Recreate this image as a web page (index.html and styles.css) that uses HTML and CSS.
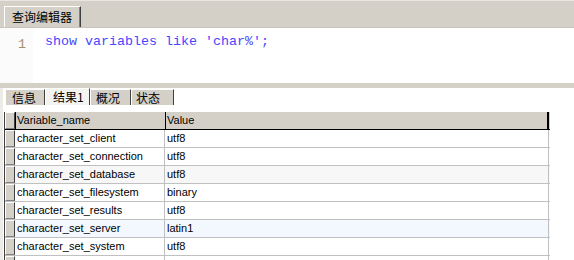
FILE: index.html
```html
<!DOCTYPE html>
<html lang="zh-CN">
<head>
    <meta charset="UTF-8">
    <title>查询编辑器</title>
    <link rel="stylesheet" href="styles.css">
</head>
<body>

    <div class="top-bar">
        <div class="editor-tab">查询编辑器</div>
    </div>

    <div class="editor">
        <div class="gutter"><span class="line-no">1</span></div>
        <div class="code">show variables like 'char%';</div>
    </div>

    <div class="splitter"></div>

    <div class="result-panel">
        <div class="result-tabs">
            <div class="result-tab tab-info">信息</div>
            <div class="result-tab tab-result active">结果1</div>
            <div class="result-tab tab-profile">概况</div>
            <div class="result-tab tab-status">状态</div>
        </div>

        <div class="grid">
            <div class="grid-row head">
                <div class="marker"></div>
                <div class="cell">Variable_name</div>
                <div class="cell">Value</div>
            </div>
            <div class="grid-row">
                <div class="marker"></div>
                <div class="cell">character_set_client</div>
                <div class="cell">utf8</div>
            </div>
            <div class="grid-row">
                <div class="marker"></div>
                <div class="cell">character_set_connection</div>
                <div class="cell">utf8</div>
            </div>
            <div class="grid-row alt">
                <div class="marker"></div>
                <div class="cell">character_set_database</div>
                <div class="cell">utf8</div>
            </div>
            <div class="grid-row">
                <div class="marker"></div>
                <div class="cell">character_set_filesystem</div>
                <div class="cell">binary</div>
            </div>
            <div class="grid-row">
                <div class="marker"></div>
                <div class="cell">character_set_results</div>
                <div class="cell">utf8</div>
            </div>
            <div class="grid-row hover">
                <div class="marker"></div>
                <div class="cell">character_set_server</div>
                <div class="cell">latin1</div>
            </div>
            <div class="grid-row">
                <div class="marker"></div>
                <div class="cell">character_set_system</div>
                <div class="cell">utf8</div>
            </div>
            <div class="grid-row last">
                <div class="marker"></div>
                <div class="cell"></div>
                <div class="cell"></div>
            </div>
        </div>
    </div>

</body>
</html>
```

FILE: styles.css
```css
body {
    margin: 0;
    width: 574px;
    height: 260px;
    overflow: hidden;
    background-color: #fff;
    font-family: "Liberation Sans", Arial, "Noto Sans CJK SC", sans-serif;
}
.top-bar {
    height: 27px;
    box-sizing: border-box;
    padding-left: 4px;
    background-color: #d4d0c8;
    border-top: 1px solid #e8e6e0;
    display: flex;
    align-items: flex-end;
}
.editor-tab {
    height: 20px;
    line-height: 20px;
    padding: 0 8px 0 7px;
    white-space: nowrap;
    font-family: "Noto Sans CJK SC", sans-serif;
    font-size: 12px;
    color: #000;
    background-color: #d4d0c8;
    border-top: 1px solid #fff;
    border-left: 1px solid #fff;
    border-right: 1px solid #404040;
    box-shadow: inset -1px 0 0 #808080;
}
.editor {
    height: 56px;
    box-sizing: border-box;
    border-top: 1px solid #c8c4bc;
    display: flex;
    background-color: #fff;
}
.gutter {
    width: 33px;
    box-sizing: border-box;
    padding-top: 6px;
    padding-right: 7px;
    text-align: right;
    background-color: #fbfbfb;
}
.line-no, .code {
    font-family: "Liberation Mono", "Courier New", monospace;
    font-size: 13.33px;
    line-height: 16px;
}
.line-no {
    color: #a09070;
}
.code {
    padding-top: 6px;
    padding-left: 12px;
    color: #4646ff;
}
.splitter {
    height: 5px;
    background-color: #d4d0c8;
}
.result-panel {
    height: 172px;
    overflow: hidden;
    background-color: #fff;
    border-left: 3px solid #ecebe8;
}
.result-tabs {
    display: flex;
    align-items: flex-end;
    height: 17px;
    padding-left: 2px;
}
.result-tab {
    box-sizing: border-box;
    height: 16px;
    line-height: 16px;
    padding-left: 6px;
    white-space: nowrap;
    font-family: "Noto Sans CJK SC", sans-serif;
    font-size: 12px;
    color: #000;
    background-color: #d4d0c8;
    border-top: 1px solid #fff;
    border-left: 1px solid #fff;
    border-right: 1px solid #404040;
}
.result-tab.active {
    height: 17px;
    padding-left: 7px;
    background-color: #f4f3f0;
}
.tab-info { width: 40px; }
.tab-result { width: 45px; }
.tab-profile { width: 41px; padding-left: 5px; }
.tab-status { width: 43px; padding-left: 4px; }
.grid {
    margin-top: 7px;
    margin-left: 1px;
    width: 545px;
    border-left: 1px solid #404040;
}
.grid-row {
    display: grid;
    grid-template-columns: 10px 150px 384px;
    height: 18px;
    box-sizing: border-box;
    border-bottom: 1px solid #c0c0c0;
    font-size: 11px;
    line-height: 17px;
    color: #000;
}
.grid-row.head {
    background-color: #d4d0c8;
    border-bottom: 1px solid #000;
}
.grid-row.alt {
    background-color: #f7f7f7;
}
.grid-row.hover {
    background-color: #f2f8fe;
}
.grid-row.last {
    height: 5px;
    border-bottom: none;
}
.marker {
    box-sizing: border-box;
    background-color: #d4d0c8;
    border-top: 1px solid #fff;
    border-left: 1px solid #fff;
    border-right: 1px solid #404040;
    border-bottom: 1px solid #808080;
}
.cell {
    padding-left: 2px;
    border-right: 1px solid #c0c0c0;
    white-space: nowrap;
    overflow: hidden;
}
.head .cell {
    border-left: 1px solid #000;
    border-right: none;
    padding-left: 1px;
}
.head .cell:last-child {
    border-right: 2px solid #000;
}
```
